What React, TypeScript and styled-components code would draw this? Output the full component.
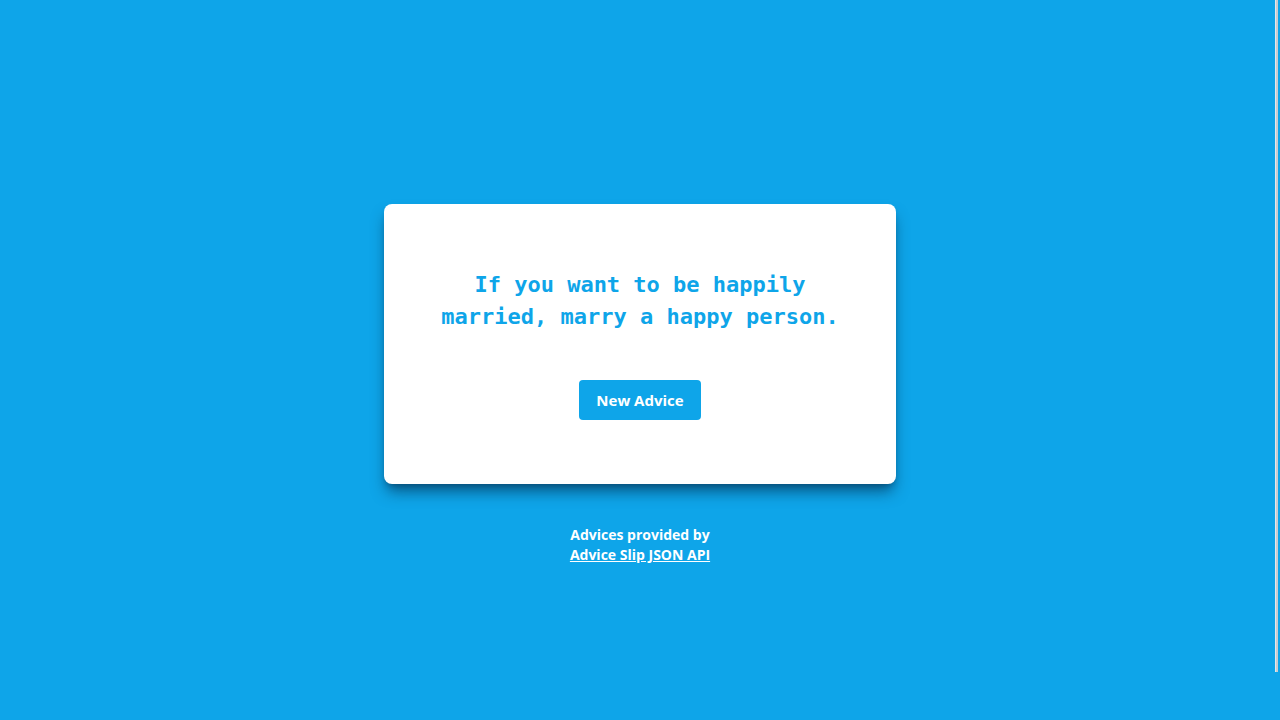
import React from "react";
import styled, { createGlobalStyle } from "styled-components";

const Global = createGlobalStyle`
  html, body { margin: 0; padding: 0; background: #0ea5e9; overflow: hidden; }
  * { box-sizing: border-box; }
`;

const Page = styled.main`
  height: 100vh;
  padding-top: 48px;
  display: flex;
  flex-direction: column;
  align-items: center;
  justify-content: center;
  background: #0ea5e9;
`;

const Card = styled.section`
  width: 512px;
  background: #ffffff;
  border-radius: 8px;
  padding: 64px 32px;
  display: flex;
  flex-direction: column;
  align-items: center;
  gap: 47px;
  box-shadow: 0 10px 15px -3px rgba(7, 70, 110, 0.85), 0 4px 6px -4px rgba(7, 70, 110, 0.85);
`;

const Quote = styled.h1`
  margin: 0;
  padding-top: 1px;
  font-family: "DejaVu Sans Mono", "Liberation Mono", monospace;
  font-weight: 700;
  font-size: 22px;
  line-height: 32px;
  color: #0ea5e9;
  text-align: center;
  max-width: 420px;
`;

const Button = styled.button`
  height: 40px;
  padding: 0 17px;
  border: none;
  border-radius: 4px;
  background: #0ea5e9;
  color: #ffffff;
  font-family: "Open Sans", "Noto Sans", sans-serif;
  font-weight: 700;
  font-size: 15px;
  cursor: pointer;
`;

const Footer = styled.footer`
  margin-top: 41px;
  margin-bottom: -1px;
  text-align: center;
  color: #ffffff;
  font-family: "Open Sans", "Noto Sans", sans-serif;
  font-weight: 700;
  font-size: 14px;
  line-height: 20px;
`;

const Link = styled.a`
  color: #ffffff;
  text-decoration: underline;
  display: block;
`;

const ScrollThumb = styled.div`
  position: fixed;
  top: 0;
  right: 2px;
  width: 3px;
  height: 672px;
  background: #c9cdd1;
  border-left: 1px solid #e4e7ea;
`;

export default function App() {
  return (
    <>
      <Global />
      <Page>
        <Card>
          <Quote>If you want to be happily married, marry a happy person.</Quote>
          <Button>New Advice</Button>
        </Card>
        <Footer>
          Advices provided by
          <Link href="#">Advice Slip JSON API</Link>
        </Footer>
      </Page>
      <ScrollThumb />
    </>
  );
}
